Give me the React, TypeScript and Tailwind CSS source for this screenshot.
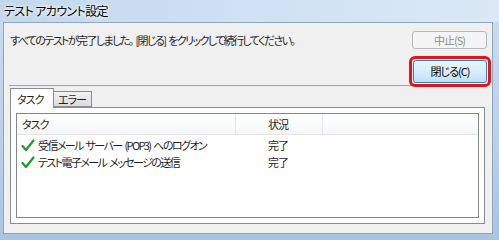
const font = { fontFamily: '"Noto Sans CJK JP", "Noto Sans", sans-serif' };

function Check() {
  return (
    <svg width="14" height="13" viewBox="0 0 14 13" className="shrink-0">
      <path d="M1.5 7 L5 11 L12.5 1.5" fill="none" stroke="#1f9a2a" strokeWidth="2.2" strokeLinecap="round" strokeLinejoin="round" />
    </svg>
  );
}

function Row({ task, status }: { task: string; status: string }) {
  return (
    <div className="flex h-[17px] items-center">
      <div className="flex w-[219px] items-center gap-[3px] pl-[4px]">
        <Check />
        <span className="whitespace-nowrap tracking-[-1.6px] [word-spacing:2px]">{task}</span>
      </div>
      <span className="pl-[32px]">{status}</span>
    </div>
  );
}

export default function App() {
  return (
    <div
      className="relative h-[240px] w-[499px] overflow-hidden bg-gradient-to-b from-[#c9ddf1] via-[#bdd3ea] to-[#a9c4e0] text-[11px] tracking-[-1px] text-[#1e1e1e] [font-feature-settings:'palt']"
      style={font}
    >
      {/* title bar */}
      <div className="flex h-[22px] items-center bg-gradient-to-r from-[#c3d8ee] via-[#cfe1f3] to-[#dbe9f6] pl-[4px]">
        <span className="text-[12px] tracking-[-0.6px] text-black [text-shadow:0_0_6px_#ffffff,0_0_3px_#ffffff]">テスト アカウント設定</span>
      </div>

      {/* client */}
      <div className="ml-[3px] mr-[6px] flex h-[212px] flex-col border border-[#8ea5be] bg-[#f0f0f0]">
        <div className="mt-[8px] flex items-center justify-between pl-[6px] pr-[5px]">
          <span className="whitespace-nowrap tracking-[-1.6px] [word-spacing:2px]">すべてのテストが完了しました。 [閉じる] をクリックして続行してください。</span>
          <div className="flex h-[18px] w-[75px] items-center justify-center rounded-[3px] border border-[#b5b9bc] bg-[#f4f4f4] text-[#8d8d8d]">
            中止(S)
          </div>
        </div>

        <div className="relative z-10 mt-[7px] flex justify-end pr-[1px]">
          <div className="rounded-[6px] border-[3px] border-[#e3141b] p-[1px]">
            <div className="flex h-[23px] w-[74px] items-center justify-center rounded-[3px] border border-[#3c7fb1] bg-gradient-to-b from-[#e8f4fc] via-[#d9eefb] to-[#bfe1f8] text-black">
              閉じる(C)
            </div>
          </div>
        </div>

        <div className="ml-[5px] mr-[4px] -mt-[2px] h-px bg-[#a0a0a0]" />

        {/* tabs */}
        <div className="ml-[6px] mt-[2px] flex items-end">
          <div className="relative z-10 -mb-px flex h-[20px] w-[44px] items-start border border-b-0 border-[#898c95] bg-white pl-[6px] pt-[2px]">
            タスク
          </div>
          <div className="flex h-[16px] w-[38px] items-center border border-l-0 border-[#898c95] bg-gradient-to-b from-[#f2f2f2] to-[#dcdcdc] pl-[4px]">
            エラー
          </div>
        </div>

        <div className="ml-[6px] mr-[7px] flex h-[117px] flex-col border border-[#898c95] bg-white px-[5px] pb-[5px] pt-[5px]">
          <div className="flex flex-1 flex-col border border-[#828790] bg-white">
            <div className="flex h-[21px] items-center border-b border-[#e5e5e5] bg-gradient-to-b from-white to-[#f5f6f7]">
              <div className="flex h-full w-[219px] items-center border-r border-[#e2e3ea] pl-[5px]">タスク</div>
              <div className="flex h-full w-[87px] items-center border-r border-[#e2e3ea] pl-[32px]">状況</div>
            </div>
            <div className="pt-[2px]">
              <Row task="受信メール サーバー (POP3) へのログオン" status="完了" />
              <Row task="テスト電子メール メッセージの送信" status="完了" />
            </div>
          </div>
        </div>
      </div>
    </div>
  );
}
